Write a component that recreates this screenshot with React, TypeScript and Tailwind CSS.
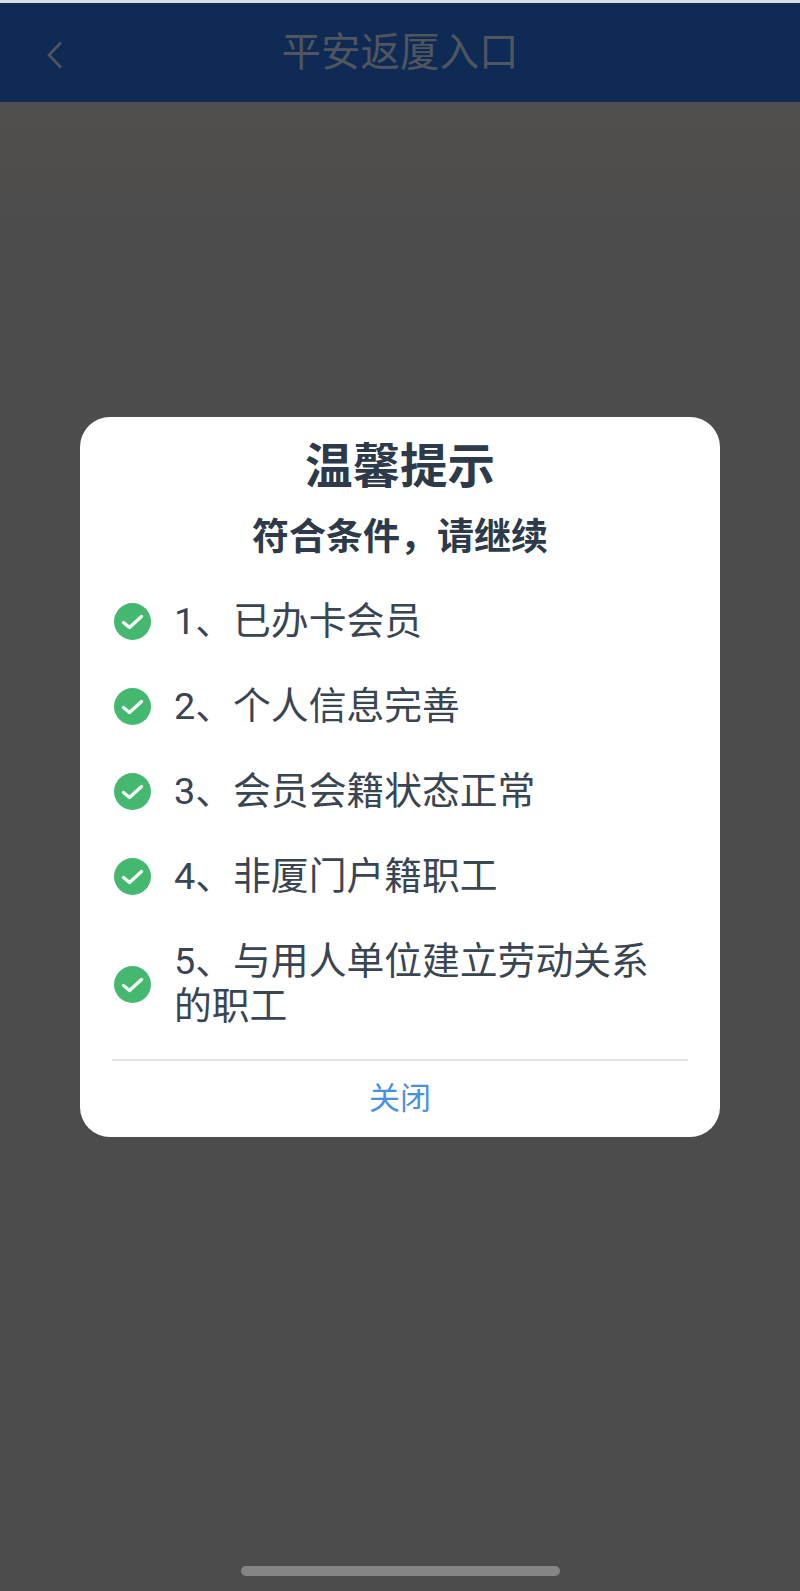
import React from "react";

const font = { cjk: "font-['Roboto','Noto_Sans_CJK_SC',sans-serif]" };

const conditions = [
  "1、已办卡会员",
  "2、个人信息完善",
  "3、会员会籍状态正常",
  "4、非厦门户籍职工",
  "5、与用人单位建立劳动关系的职工",
];

const CheckIcon: React.FC = () => (
  <svg viewBox="0 0 37 37" className="h-[37px] w-[37px] shrink-0">
    <circle cx="18.5" cy="18.5" r="18.5" fill="#45b86f" />
    <path
      d="M9.5 19.5l6 5L27.5 13.5"
      fill="none"
      stroke="#f4fbf6"
      strokeWidth="3.4"
      strokeLinecap="round"
      strokeLinejoin="round"
    />
  </svg>
);

const App: React.FC = () => {
  return (
    <div className={`flex h-[1591px] w-[800px] flex-col overflow-hidden bg-[#4c4c4c] ${font.cjk}`}>
      <div className="h-[3px] bg-[#d8dde2]" />

      <header className="relative flex h-[99px] items-center justify-center bg-[#0f2b55]">
        <svg viewBox="0 0 18 28" className="absolute left-[46px] top-[38px] h-[28px] w-[18px]">
          <path d="M15 1.5L3 14l12 12.5" fill="none" stroke="#50565f" strokeWidth="2.6" />
        </svg>
        <h1 className="text-[39.5px] leading-none font-normal text-[#50555e]">平安返厦入口</h1>
      </header>

      <main className="flex flex-1 flex-col items-center justify-between bg-gradient-to-b from-[#524f4d] to-[#4c4c4c] to-[8%] pt-[315px] pb-[15px]">
        <section className="flex h-[720px] w-[640px] flex-col rounded-[30px] bg-white">
          <h2 className="mt-[25px] text-center text-[47.5px] leading-[50px] font-bold text-[#2c3a4a]">温馨提示</h2>
          <p className="mt-[26px] text-center text-[37px] leading-[40px] font-bold text-[#2c3a4a]">符合条件，请继续</p>

          <ul className="mt-[21px] flex flex-col pr-[45px] pl-[34px]">
            {conditions.map((text, i) => (
              <li
                key={text}
                className={`flex items-center gap-[23px] ${i === conditions.length - 1 ? "h-[130px]" : "h-[85px]"}`}
              >
                <CheckIcon />
                <span className="text-[37.8px] leading-[45px] text-[#3a4552]">{text}</span>
              </li>
            ))}
          </ul>

          <div className="mx-[32px] mt-[10px] h-[2px] bg-[#e2e3e5]" />
          <button type="button" className="flex-1 text-[31px] text-[#4a90e2]">
            关闭
          </button>
        </section>

        <div className="h-[10px] w-[319px] rounded-full bg-[#858585]" />
      </main>
    </div>
  );
};

export default App;
